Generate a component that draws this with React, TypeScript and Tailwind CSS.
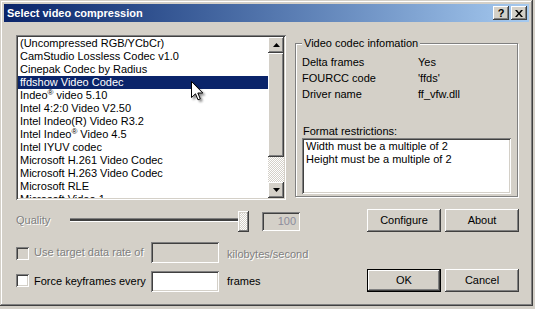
const raised =
  "shadow-[inset_-1px_-1px_0_#404040,inset_1px_1px_0_#ffffff,inset_-2px_-2px_0_#808080,inset_2px_2px_0_#d4d0c8]";
const sunken =
  "shadow-[inset_1px_1px_0_#808080,inset_-1px_-1px_0_#ffffff,inset_2px_2px_0_#404040,inset_-2px_-2px_0_#d4d0c8]";
const dither =
  "bg-[image:repeating-conic-gradient(#ffffff_0_25%,#d4d0c8_0_50%)] bg-[length:2px_2px]";
const disabledText = "text-[#808080] [text-shadow:1px_1px_0_#ffffff]";

const Reg = () => <span className="text-[8px] leading-[8px] align-top">®</span>;

const codecs: React.ReactNode[] = [
  "(Uncompressed RGB/YCbCr)",
  "CamStudio Lossless Codec v1.0",
  "Cinepak Codec by Radius",
  "ffdshow Video Codec",
  <>Indeo<Reg /> video 5.10</>,
  "Intel 4:2:0 Video V2.50",
  "Intel Indeo(R) Video R3.2",
  <>Intel Indeo<Reg /> Video 4.5</>,
  "Intel IYUV codec",
  "Microsoft H.261 Video Codec",
  "Microsoft H.263 Video Codec",
  "Microsoft RLE",
  "Microsoft Video 1",
];

function Arrow({ up }: { up?: boolean }) {
  return (
    <svg width="7" height="4" viewBox="0 0 7 4" className="block">
      <path d={up ? "M3.5 0 L7 4 L0 4 Z" : "M0 0 L7 0 L3.5 4 Z"} fill="#000" />
    </svg>
  );
}

function Button({ label, isDefault }: { label: string; isDefault?: boolean }) {
  return (
    <div
      className={`w-[74px] h-[23px] flex items-center justify-center bg-[#d4d0c8] ${
        isDefault ? "border border-black" : ""
      } ${raised}`}
    >
      {label}
    </div>
  );
}

export default function App() {
  return (
    <div className="relative w-[535px] h-[309px] bg-[#d4d0c8] [font-family:'Liberation_Sans',Arial,sans-serif] text-[11px] leading-[13px] text-black">
      <div className="w-[533px] h-[306px] p-[4px] flex flex-col bg-[#d4d0c8] shadow-[inset_-1px_-1px_0_#404040,inset_1px_1px_0_#d4d0c8,inset_-2px_-2px_0_#808080,inset_2px_2px_0_#ffffff]">
        {/* title bar */}
        <div className="h-[18px] flex items-center pl-[3px] pr-[2px] bg-linear-to-r from-[#0a246a] to-[#a6caf0]">
          <span className="text-white font-bold text-[11px]">Select video compression</span>
          <div className="ml-auto flex gap-[2px]">
            <div className={`w-[16px] h-[14px] bg-[#d4d0c8] flex items-center justify-center font-bold text-[11px] leading-[11px] ${raised}`}>
              ?
            </div>
            <div className={`w-[16px] h-[14px] bg-[#d4d0c8] flex items-center justify-center ${raised}`}>
              <svg width="8" height="7" viewBox="0 0 8 7">
                <path d="M0 0h2l2 2.5 2-2.5h2L5 3.5 8 7H6L4 4.5 2 7H0l3-3.5z" fill="#000" />
              </svg>
            </div>
          </div>
        </div>

        <div className="flex flex-col pl-[12px] pr-[10px] pt-[13px]">
          {/* list + info */}
          <div className="flex items-start">
            <div className={`w-[270px] h-[165px] bg-white p-[2px] flex ${sunken}`}>
              <div className="flex-1 overflow-hidden">
                {codecs.map((c, i) => (
                  <div
                    key={i}
                    className={`h-[13px] pl-[2px] whitespace-nowrap ${
                      i === 3 ? "bg-[#0a246a] text-white" : ""
                    }`}
                  >
                    {c}
                  </div>
                ))}
              </div>
              <div className="w-[16px] flex flex-col">
                <div className={`h-[16px] bg-[#d4d0c8] flex items-center justify-center ${raised}`}>
                  <Arrow up />
                </div>
                <div className={`h-[104px] bg-[#d4d0c8] ${raised}`} />
                <div className={`h-[25px] ${dither}`} />
                <div className={`h-[16px] bg-[#d4d0c8] flex items-center justify-center ${raised}`}>
                  <Arrow />
                </div>
              </div>
            </div>

            <div className="relative ml-[9px] mt-[8px] w-[223px] h-[154px] border border-[#808080] shadow-[inset_1px_1px_0_#ffffff,1px_1px_0_#ffffff] pl-[6px] pt-[10px]">
              <span className="absolute -top-[7px] left-[6px] px-[2px] bg-[#d4d0c8]">
                Video codec infomation
              </span>
              {[
                ["Delta frames", "Yes"],
                ["FOURCC code", "'ffds'"],
                ["Driver name", "ff_vfw.dll"],
              ].map(([k, v]) => (
                <div key={k} className="flex h-[16px] items-center">
                  <span className="w-[116px]">{k}</span>
                  <span>{v}</span>
                </div>
              ))}
              <div className="mt-[23px] pl-[1px]">Format restrictions:</div>
              <div className={`w-[209px] h-[56px] bg-white pt-[2px] pl-[4px] ${sunken}`}>
                <div>Width must be a multiple of 2</div>
                <div>Height must be a multiple of 2</div>
              </div>
            </div>
          </div>

          {/* quality row */}
          <div className="flex items-start h-[23px] mt-[9px]">
            <span className={`w-[52px] mt-[5px] ${disabledText}`}>Quality</span>
            <div className="w-[181px] h-[23px] flex items-start">
              <div className="ml-[2px] flex-1 mt-[9px] h-[4px] bg-[#404040] border-t border-t-[#808080] border-b border-b-white" />
              <div className={`w-[11px] h-[21px] mt-[2px] ${dither} ${raised}`} />
            </div>
            <div className={`ml-[13px] mt-[3px] w-[38px] h-[19px] bg-[#d4d0c8] flex items-center justify-end pr-[4px] text-[#8c8c9c] ${sunken}`}>
              100
            </div>
            <div className="ml-auto flex gap-[4px]">
              <Button label="Configure" />
              <Button label="About" />
            </div>
          </div>

          {/* data rate row */}
          <div className="flex items-start h-[21px] mt-[10px]">
            <div className={`w-[13px] h-[13px] mt-[5px] bg-[#d4d0c8] ${sunken}`} />
            <span className={`ml-[5px] w-[117px] mt-[4px] ${disabledText}`}>Use target data rate of</span>
            <div className={`w-[68px] h-[21px] bg-[#d4d0c8] ${sunken}`} />
            <span className={`ml-[8px] mt-[6px] ${disabledText}`}>kilobytes/second</span>
          </div>

          {/* keyframes row */}
          <div className="flex items-start h-[23px] mt-[6px]">
            <div className={`w-[13px] h-[13px] mt-[5px] bg-white ${sunken}`} />
            <span className="ml-[5px] w-[117px] mt-[6px]">Force keyframes every</span>
            <div className={`w-[68px] h-[21px] mt-[2px] bg-white ${sunken}`} />
            <span className="ml-[8px] mt-[6px]">frames</span>
            <div className="ml-auto flex gap-[4px]">
              <Button label="OK" isDefault />
              <Button label="Cancel" />
            </div>
          </div>
        </div>
      </div>

      {/* mouse pointer */}
      <svg
        className="absolute left-[191px] top-[81px] drop-shadow-[2px_2px_1px_rgba(0,0,0,0.45)]"
        width="13"
        height="20"
        viewBox="0 0 13 20"
      >
        <path
          d="M0.5 0.5 L0.5 16.5 L4.5 12.8 L7 18.8 L9.3 17.8 L6.8 12 L11.8 12 Z"
          fill="#fff"
          stroke="#000"
          strokeWidth="1"
          strokeLinejoin="miter"
        />
      </svg>
    </div>
  );
}
